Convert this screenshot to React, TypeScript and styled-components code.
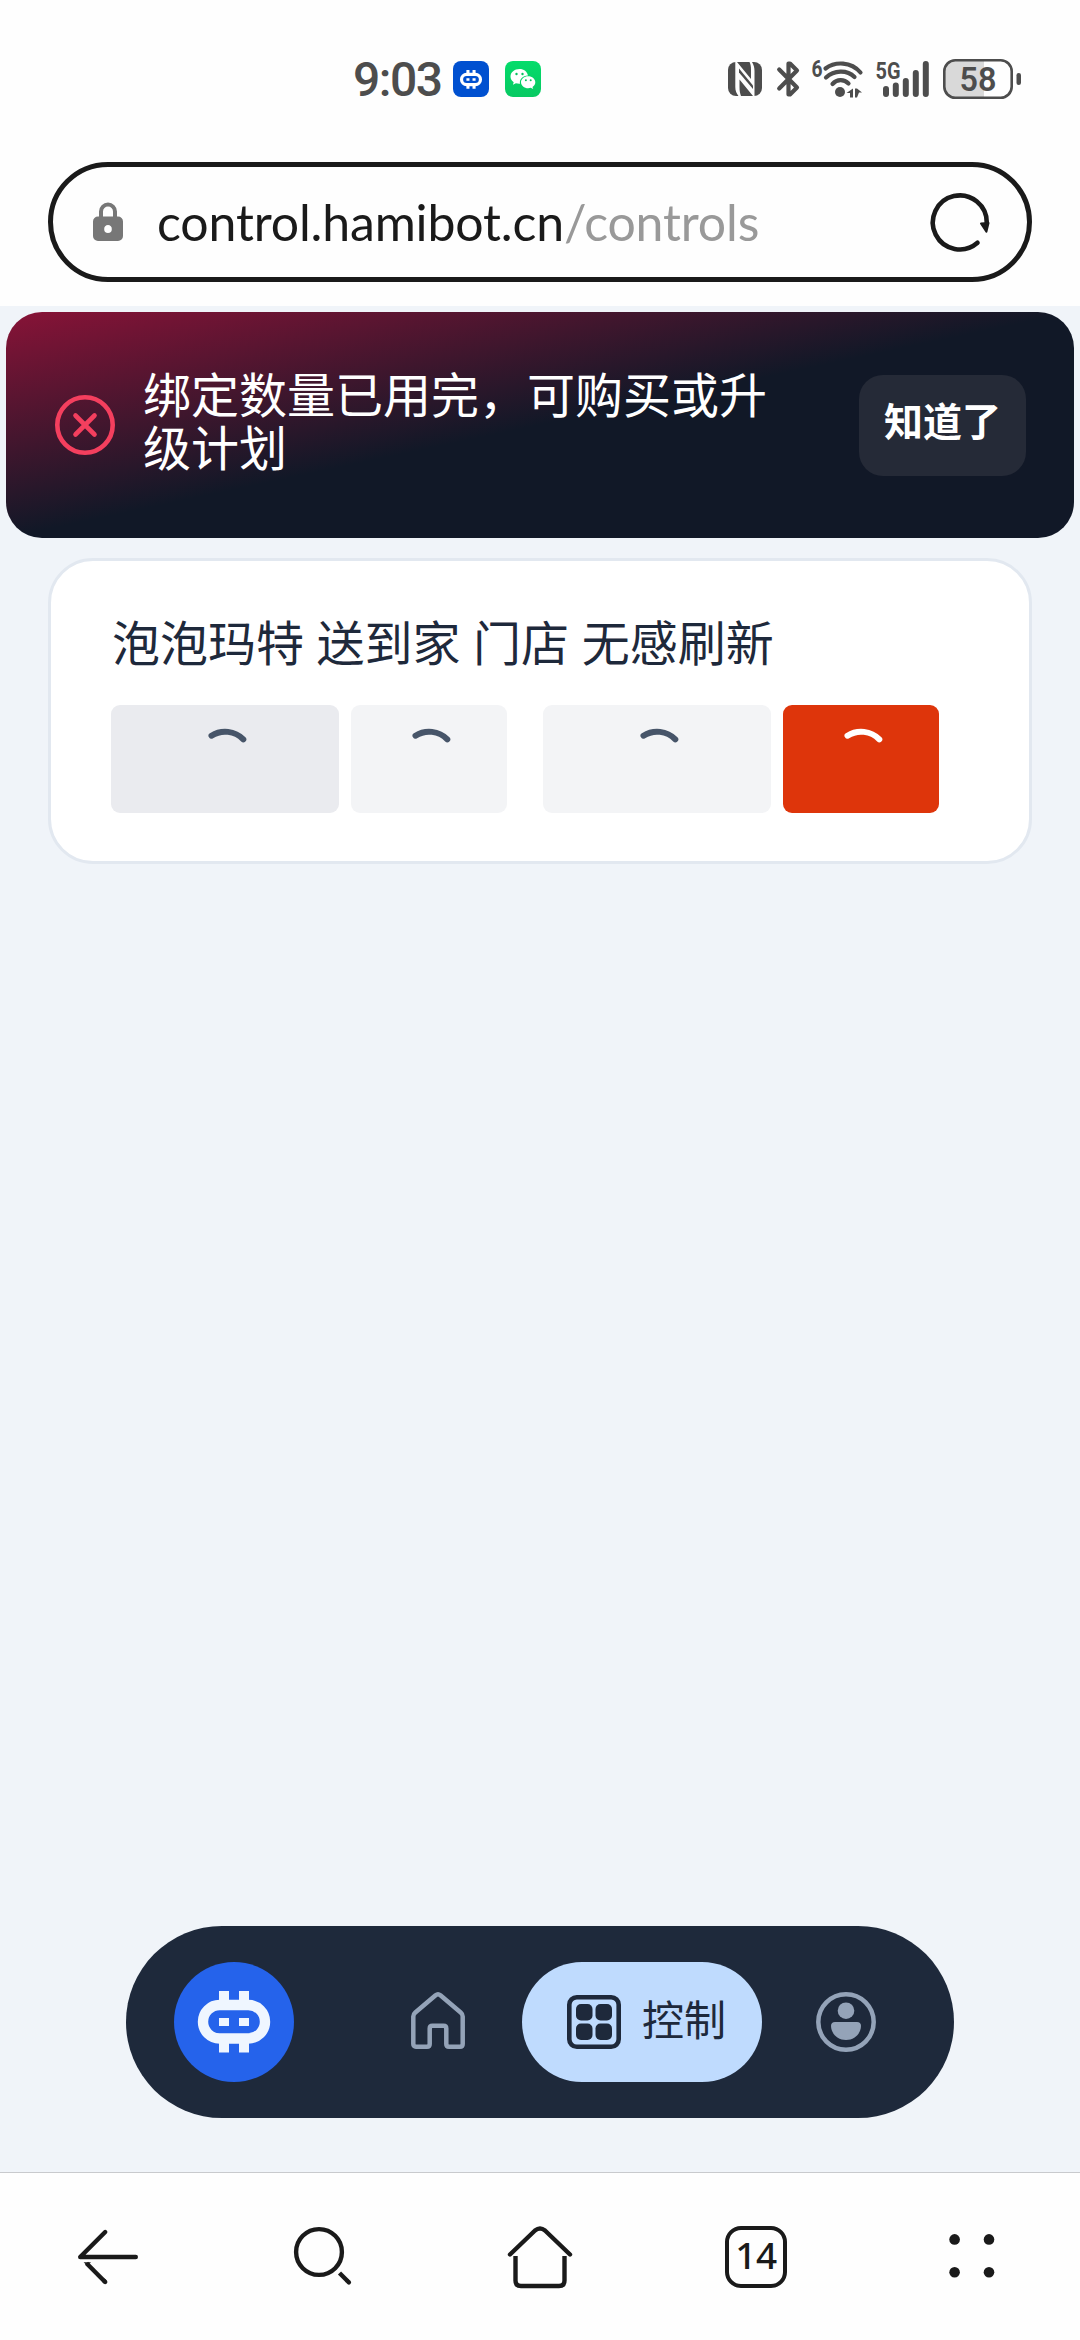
import React from 'react';
import styled, { createGlobalStyle } from 'styled-components';

const GlobalStyle = createGlobalStyle`
  *, *::before, *::after { box-sizing: border-box; }
  html, body { margin: 0; padding: 0; background: #fff; }
  body { font-family: Lato, 'Noto Sans CJK SC', sans-serif; }
  button { border: 0; padding: 0; margin: 0; font: inherit; background: none; }
  svg { display: block; flex: none; overflow: visible; }
`;

const INK = '#1a1a1a';
const STATUS = '#4d4d4d';
const CJK = `'Noto Sans CJK SC', sans-serif`;

const Screen = styled.div`
  display: flex;
  flex-direction: column;
  width: 1080px;
  height: 2340px;
  background: #fefefe;
  overflow: hidden;
`;

/* ---------- status bar ---------- */

const StatusBar = styled.header`
  display: flex;
  align-items: center;
  height: 158px;
  padding: 0 59px 0 353px;
`;

const Clock = styled.span`
  width: 100px;
  padding-top: 2px;
  font: 500 48px/48px Roboto, sans-serif;
  letter-spacing: -1.5px;
  color: ${STATUS};
`;

const AppBadge = styled.span<{ $bg: string; $gap?: number }>`
  display: flex;
  align-items: center;
  justify-content: center;
  width: 36px;
  height: 36px;
  margin-left: ${p => p.$gap ?? 0}px;
  border-radius: 8px;
  background: ${p => p.$bg};
`;

const StatusIcons = styled.div`
  display: flex;
  align-items: center;
  margin-left: auto;
`;

const Spacer = styled.span<{ $w: number }>`
  width: ${p => p.$w}px;
`;

/* ---------- address bar ---------- */

const AddressBar = styled.div`
  display: flex;
  align-items: center;
  flex: none;
  height: 120px;
  margin: 4px 48px 24px;
  padding: 0 37px 0 40px;
  border: 5px solid ${INK};
  border-radius: 60px;
`;

const Url = styled.div`
  flex: 1;
  margin-left: 34px;
  font: 400 50px/60px Lato, sans-serif;
  letter-spacing: -0.15px;
  color: ${INK};
  white-space: nowrap;
`;

const UrlPath = styled.span`
  color: #999;
`;

/* ---------- page ---------- */

const Page = styled.main`
  display: flex;
  flex-direction: column;
  flex: 1;
  padding: 6px 0 54px;
  background: #f0f4f9;
`;

const Toast = styled.div`
  display: flex;
  align-items: center;
  height: 226px;
  margin: 0 6px;
  padding: 0 48px 0 49px;
  border-radius: 36px;
  background: linear-gradient(to bottom right, #881337, #111827 50%);
`;

const ToastText = styled.p`
  width: 630px;
  margin: 0 0 12px 28px;
  font: 400 48px/53px ${CJK};
  color: #fff;
`;

const ToastButton = styled.button`
  width: 167px;
  height: 101px;
  margin-left: auto;
  padding-bottom: 12px;
  border-radius: 24px;
  background: #252a37;
  font: 700 39px/56px ${CJK};
  color: #fff;
`;

const Card = styled.section`
  height: 306px;
  margin: 20px 48px 0;
  padding: 43px 60px 0;
  border: 3px solid #e2e8f0;
  border-radius: 45px;
  background: #fff;
`;

const CardTitle = styled.h2`
  margin: 0 0 29px 1px;
  font: 400 48px/72px ${CJK};
  word-spacing: 1.8px;
  color: #1e293b;
`;

const Actions = styled.div`
  display: flex;
  gap: 36px;
`;

const ActionPair = styled.div`
  display: flex;
  gap: 12px;
`;

const LoadingButton = styled.button<{ $w: number; $bg: string; $fg: string }>`
  display: flex;
  align-items: center;
  justify-content: center;
  width: ${p => p.$w}px;
  height: 108px;
  border-radius: 9px;
  background: ${p => p.$bg};
  color: ${p => p.$fg};
`;

const Dock = styled.nav`
  display: flex;
  align-items: center;
  width: 828px;
  height: 192px;
  margin: auto auto 0;
  padding: 0 24px 0 48px;
  border-radius: 96px;
  background: #1e293b;
`;

const DockLogo = styled.a`
  display: flex;
  align-items: center;
  justify-content: center;
  flex: none;
  width: 120px;
  height: 120px;
  margin-right: 60px;
  border-radius: 50%;
  background: #2563eb;
  color: #eff6ff;
`;

const DockItem = styled.a<{ $active?: boolean }>`
  display: flex;
  align-items: center;
  justify-content: center;
  flex: none;
  gap: 21px;
  width: ${p => (p.$active ? 240 : 168)}px;
  height: 120px;
  padding-left: ${p => (p.$active ? 9 : 0)}px;
  border-radius: 60px;
  background: ${p => (p.$active ? '#bfdbfe' : 'transparent')};
  color: ${p => (p.$active ? '#1e293b' : '#94a3b8')};
  font: 400 42px/60px ${CJK};
`;

const DockLabel = styled.span`
  margin-bottom: 8px;
`;

/* ---------- browser toolbar ---------- */

const Toolbar = styled.footer`
  display: grid;
  grid-template-columns: repeat(5, 216px);
  flex: none;
  height: 168px;
  border-top: 1px solid #c8cacd;
`;

const ToolButton = styled.button`
  display: flex;
  align-items: center;
  justify-content: center;
  color: ${INK};
`;

const TabCount = styled.span`
  display: flex;
  align-items: center;
  justify-content: center;
  width: 62px;
  height: 62px;
  padding-bottom: 4px;
  border: 4.5px solid ${INK};
  border-radius: 16px;
  font: 500 37px/46px 'Noto Sans', sans-serif;
  letter-spacing: -0.5px;
`;

/* ---------- icons ---------- */

const RobotMark = ({ w, h }: { w: number; h: number }) => (
  <svg width={w} height={h} viewBox="0 0 72 62" fill="currentColor">
    <path d="M21 0h10v10H21zM41 0h10v10H41zM21 51h10v10.5H21zM41 51h10v10.5H41zM21 27h10v8H21zM41 27h10v8H41z" />
    <rect x="5" y="14" width="62" height="33.5" rx="16.7" fill="none" stroke="currentColor" strokeWidth="10.4" />
  </svg>
);

const WeChatMark = () => (
  <svg width="26" height="22" viewBox="0 0 26 22">
    <path fill="#fff" d="M9.5 1C4.500 1 .5 4.300.5 8.500c0 2.300 1.200 4.300 3.200 5.700l-.8 2.500 3-1.500c1 .3 2.200.5 3.400.5h.7c-.9-4.500 3-8.300 8-8.200C17.400 3.700 13.800 1 9.500 1z" />
    <path fill="#fff" d="M18.200 8.200c-4 0-7.200 2.700-7.200 6s3.200 6 7.200 6c.9 0 1.700-.1 2.500-.4l2.500 1.300-.7-2.200c1.700-1.100 2.800-2.800 2.800-4.700 0-3.300-3.100-6-7.100-6z" />
    <g fill="#07c160">
      <circle cx="6.500" cy="6" r="1.200" />
      <circle cx="12.500" cy="6" r="1.200" />
      <circle cx="15.900" cy="12.300" r="1" />
      <circle cx="20.700" cy="12.300" r="1" />
    </g>
  </svg>
);

const NfcIcon = () => (
  <svg width="34" height="34" viewBox="0 0 34 34">
    <rect width="34" height="34" rx="8" fill={STATUS} />
    <path d="M7.300 0 L9 0 L23 17 V8 C23 4 22.500 2 21.500 0 H24 C25.500 2.500 26.500 5 26.500 9 V34 H25 L11.500 17.500 V25 C11.500 29 12 31.500 13 34 H10.500 C8.500 31 7.300 29 7.300 25Z" fill="#fefefe" />
    <path d="M11 6.500 L25 23.500 V27 L11 10.500Z" fill={STATUS} />
  </svg>
);

const BluetoothIcon = () => (
  <svg width="23" height="36" viewBox="0 0 23 36" fill="none" stroke={STATUS} strokeWidth="4.200" strokeLinejoin="round" strokeLinecap="round">
    <path d="M2.200 8.500L20 26.500L13 33.500H11.500V2.500H13L20 9.500L2.200 27.500" />
  </svg>
);

const WifiIcon = () => (
  <svg width="51" height="38" viewBox="0 0 51 38">
    <text x="-.5" y="17" fontFamily="Roboto, sans-serif" fontWeight="700" fontSize="23" textLength="11" lengthAdjust="spacingAndGlyphs" fill={STATUS}>6</text>
    <g fill="none" stroke={STATUS} strokeWidth="4.200" strokeLinecap="round">
      <path d="M13.500 8.500C23 1.300 39 1.300 48.500 12.500" />
      <path d="M14 17.500C22 10 35 9.500 42.500 17" />
      <path d="M20.500 24C25 19 32 19 36.500 23.500" />
    </g>
    <circle cx="28" cy="32" r="5" fill={STATUS} />
    <path d="M41 28.500v9H38v-4.500H34.500zM43 28.500h2l5 4H47L45 37.500H43z" fill={STATUS} />
  </svg>
);

const SignalIcon = () => (
  <svg width="54" height="36" viewBox="0 0 54 36">
    <text x="-.5" y="17.500" fontFamily="Roboto, sans-serif" fontWeight="700" fontSize="23.500" textLength="25" lengthAdjust="spacingAndGlyphs" fill={STATUS}>5G</text>
    <path d="M10 28v5M19.800 24.500v8.500M29.800 20v13M39.800 12v21M49.800 3v30" stroke={STATUS} strokeWidth="6" strokeLinecap="round" />
  </svg>
);

const BatteryIcon = () => (
  <svg width="78" height="40" viewBox="0 0 78 40">
    <path d="M11 1H41V39H11A10 10 0 0 1 1 29V11A10 10 0 0 1 11 1Z" fill="#d9d9d9" />
    <rect x="1.300" y="1.300" width="67.400" height="37.400" rx="11" fill="none" stroke={STATUS} strokeWidth="2.600" />
    <rect x="73.500" y="14" width="4.500" height="12" rx="2.200" fill={STATUS} />
    <text x="35" y="32" textAnchor="middle" fontFamily="Roboto, sans-serif" fontWeight="600" fontSize="34" textLength="37" lengthAdjust="spacingAndGlyphs" fill={STATUS}>58</text>
  </svg>
);

const LockIcon = () => (
  <svg width="30" height="40" viewBox="0 0 30 40">
    <path d="M8 16V9.500a7 7 0 0 1 14 0V16" fill="none" stroke="#777" strokeWidth="4" />
    <path fillRule="evenodd" fill="#777" d="M5 14.500h20a5 5 0 0 1 5 5V34a5 5 0 0 1-5 5H5a5 5 0 0 1-5-5V19.500a5 5 0 0 1 5-5zM15 23a3.800 3.800 0 0 0-3.800 4.200a3.800 3.800 0 0 0 7.600 0A3.800 3.800 0 0 0 15 23z" />
  </svg>
);

const ReloadIcon = () => (
  <svg width="60" height="60" viewBox="0 0 60 60">
    <path d="M47.500 50.800A27 27 0 1 1 56.800 31" fill="none" stroke={INK} strokeWidth="4.600" strokeLinecap="round" />
    <path d="M51 31.500L58.500 31L56.400 39.800Z" fill={INK} stroke={INK} strokeWidth="2" strokeLinejoin="round" />
  </svg>
);

const ErrorIcon = () => (
  <svg width="60" height="60" viewBox="0 0 60 60" fill="none" stroke="#f43f5e" strokeWidth="4.600" strokeLinecap="round">
    <circle cx="30" cy="30" r="27.700" />
    <path d="M20.500 20.500L39.500 39.500M39.500 20.500L20.500 39.500" />
  </svg>
);

const Spinner = () => (
  <svg width="60" height="60" viewBox="0 0 60 60" fill="none" stroke="currentColor" strokeWidth="6" strokeLinecap="round">
    <path d="M16.500 6.700A25.500 25.500 0 0 1 48.300 10.300" />
  </svg>
);

const DockHomeIcon = () => (
  <svg width="60" height="60" viewBox="0 0 60 60" fill="none" stroke="currentColor" strokeWidth="4.500" strokeLinejoin="round">
    <path d="M5.300 24.500C5.300 22.800 6 21.600 7.300 20.500L27.600 3.200C29.200 1.900 30.800 1.900 32.400 3.200L52.700 20.500C54 21.600 54.700 22.800 54.700 24.500V52C54.700 53.800 53.800 54.700 52 54.700H41C39.200 54.700 38.300 53.800 38.300 52V36.500C38.300 34.700 37.400 33.800 35.600 33.800H24.400C22.600 33.800 21.700 34.700 21.700 36.500V52C21.700 53.800 20.800 54.700 19 54.700H8C6.200 54.700 5.300 53.800 5.300 52Z" />
  </svg>
);

const GridIcon = () => (
  <svg width="54" height="54" viewBox="0 0 54 54" fill="currentColor">
    <rect x="2.300" y="2.300" width="49.400" height="49.400" rx="7.500" fill="none" stroke="currentColor" strokeWidth="4.600" />
    <rect x="9" y="9" width="16.500" height="16.500" rx="5" />
    <rect x="28.500" y="9" width="16.500" height="16.500" rx="5" />
    <rect x="9" y="28.500" width="16.500" height="16.500" rx="5" />
    <rect x="28.500" y="28.500" width="16.500" height="16.500" rx="5" />
  </svg>
);

const ProfileIcon = () => (
  <svg width="60" height="60" viewBox="0 0 60 60" fill="currentColor">
    <circle cx="30" cy="30" r="27.700" fill="none" stroke="currentColor" strokeWidth="4.500" />
    <circle cx="30" cy="18.700" r="8.300" />
    <path d="M19 30H41C43.500 30 45 31.500 45 33.800C45 41 39 48 30 48S15 41 15 33.800C15 31.500 16.500 30 19 30Z" />
  </svg>
);

const BackIcon = () => (
  <svg width="60" height="60" viewBox="0 0 60 60" fill="none" stroke="currentColor" strokeWidth="4.400" strokeLinecap="round" strokeLinejoin="round">
    <path d="M57.800 30H2.200L27.200 5" />
    <path d="M8.500 36.300L27.200 55" strokeLinecap="butt" />
    <path d="M26 53.800L27.200 55" />
    <path d="M5.600 35.300H13L10 38.300H8.600Z" fill="currentColor" stroke="none" />
  </svg>
);

const SearchIcon = () => (
  <svg width="60" height="60" viewBox="0 0 60 60" fill="none" stroke="currentColor" strokeWidth="4.400">
    <circle cx="25" cy="25" r="22.900" />
    <path d="M45.500 46L53.500 54" />
    <path d="M53.500 54L54.900 55.400" strokeLinecap="round" />
  </svg>
);

const HomeIcon = () => (
  <svg width="66" height="64" viewBox="0 0 66 64" fill="none" stroke="currentColor" strokeWidth="4.400" strokeLinejoin="round">
    <path d="M3 29.500L28 5.500Q33 1.500 38 5.500L63 29.500" strokeLinecap="round" />
    <path d="M8.500 31V55.500Q8.500 61 14 61H52Q57.500 61 57.500 55.500V31" />
  </svg>
);

const MenuDots = () => (
  <svg width="46" height="46" viewBox="0 0 46 46" fill="currentColor">
    <circle cx="5.600" cy="5.400" r="5.300" />
    <circle cx="40" cy="5.400" r="5.300" />
    <circle cx="5.600" cy="38.200" r="5.300" />
    <circle cx="40" cy="38.200" r="5.300" />
  </svg>
);

const White = styled.span`
  display: flex;
  color: #fff;
`;

export default function App() {
  return (
    <Screen>
      <GlobalStyle />
      <StatusBar>
        <Clock>9:03</Clock>
        <AppBadge $bg="#0050d0"><White><RobotMark w={22} h={19} /></White></AppBadge>
        <AppBadge $bg="linear-gradient(#04dc6b, #07c962)" $gap={16}><WeChatMark /></AppBadge>
        <StatusIcons>
          <NfcIcon />
          <Spacer $w={15} />
          <BluetoothIcon />
          <Spacer $w={12} />
          <WifiIcon />
          <Spacer $w={13} />
          <SignalIcon />
          <Spacer $w={13} />
          <BatteryIcon />
        </StatusIcons>
      </StatusBar>

      <AddressBar>
        <LockIcon />
        <Url>control.hamibot.cn<UrlPath>/controls</UrlPath></Url>
        <ReloadIcon />
      </AddressBar>

      <Page>
        <Toast>
          <ErrorIcon />
          <ToastText>绑定数量已用完，可购买或升级计划</ToastText>
          <ToastButton>知道了</ToastButton>
        </Toast>

        <Card>
          <CardTitle>泡泡玛特 送到家 门店 无感刷新</CardTitle>
          <Actions>
            <ActionPair>
              <LoadingButton $w={228} $bg="#eaebef" $fg="#475569"><Spinner /></LoadingButton>
              <LoadingButton $w={156} $bg="#f3f4f6" $fg="#475569"><Spinner /></LoadingButton>
            </ActionPair>
            <ActionPair>
              <LoadingButton $w={228} $bg="#f3f4f6" $fg="#475569"><Spinner /></LoadingButton>
              <LoadingButton $w={156} $bg="#de350b" $fg="#ffffff"><Spinner /></LoadingButton>
            </ActionPair>
          </Actions>
        </Card>

        <Dock>
          <DockLogo><RobotMark w={72} h={62} /></DockLogo>
          <DockItem><DockHomeIcon /></DockItem>
          <DockItem $active><GridIcon /><DockLabel>控制</DockLabel></DockItem>
          <DockItem><ProfileIcon /></DockItem>
        </Dock>
      </Page>

      <Toolbar>
        <ToolButton><BackIcon /></ToolButton>
        <ToolButton><SearchIcon /></ToolButton>
        <ToolButton><HomeIcon /></ToolButton>
        <ToolButton><TabCount>14</TabCount></ToolButton>
        <ToolButton><MenuDots /></ToolButton>
      </Toolbar>
    </Screen>
  );
}
